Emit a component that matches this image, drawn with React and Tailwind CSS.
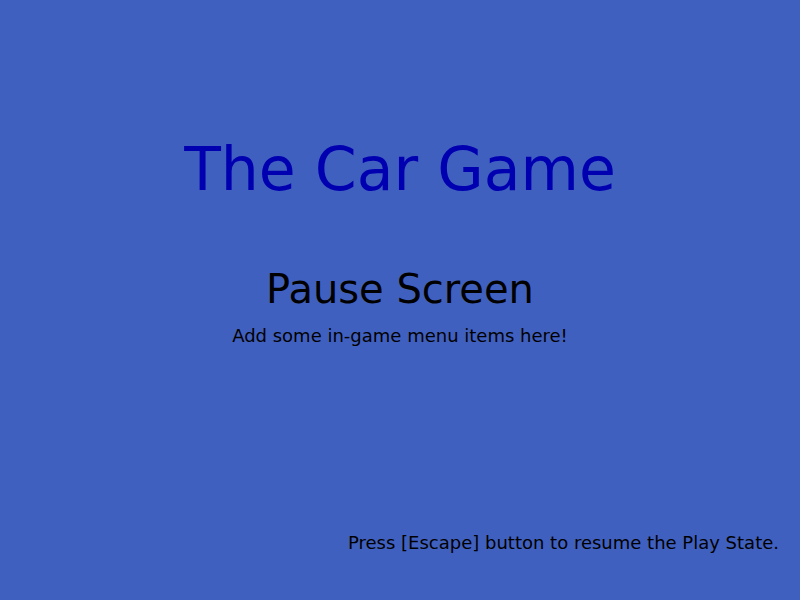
export default function App() {
  return (
    <div
      className="flex h-[600px] w-[800px] flex-col items-center bg-[#4060c0] text-black"
      style={{ fontFamily: '"DejaVu Sans", sans-serif' }}
    >
      <h1 className="pt-[139px] text-[60px] leading-none text-[#0000b0]">The Car Game</h1>
      <h2 className="mt-[70px] text-[40px] leading-none">Pause Screen</h2>
      <p className="mt-[18px] text-[18px] leading-none">Add some in-game menu items here!</p>
      <div className="mt-auto flex w-full justify-end pb-[48px] pr-[21px]">
        <p className="text-[18px] leading-none">Press [Escape] button to resume the Play State.</p>
      </div>
    </div>
  );
}
